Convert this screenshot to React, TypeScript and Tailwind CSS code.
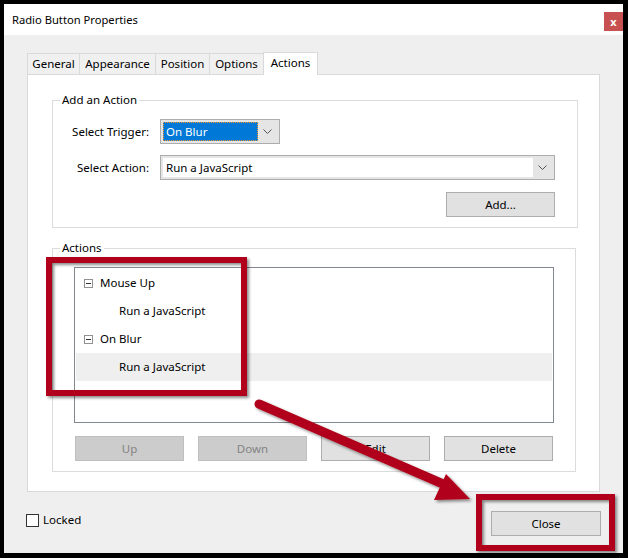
import React from 'react';

// small dropdown chevron
const Chevron = () => (
  <svg width="9" height="5" viewBox="0 0 9 5">
    <path d="M0.5 0.5 L4.5 4.5 L8.5 0.5" fill="none" stroke="#555" strokeWidth="1" />
  </svg>
);

const MinusBox = () => (
  <span className="w-[9px] h-[9px] border border-[#919191] bg-white flex items-center justify-center">
    <span className="w-[5px] h-px bg-[#333]" />
  </span>
);

type Tab = { label: string; w: string; active?: boolean };

const tabs: Tab[] = [
  { label: 'General', w: 'w-[53px]' },
  { label: 'Appearance', w: 'w-[77px]' },
  { label: 'Position', w: 'w-[55px]' },
  { label: 'Options', w: 'w-[55px]' },
  { label: 'Actions', w: 'w-[55px]', active: true },
];

type Row = { text: string; parent?: boolean; selected?: boolean };

const rows: Row[] = [
  { text: 'Mouse Up', parent: true },
  { text: 'Run a JavaScript' },
  { text: 'On Blur', parent: true },
  { text: 'Run a JavaScript', selected: true },
];

const Btn = ({ label, disabled }: { label: string; disabled?: boolean }) => (
  <div
    className={
      disabled
        ? 'w-[109px] h-[25px] border border-[#bfbfbf] bg-[#cccccc] text-[#838383] flex items-center justify-center'
        : 'w-[109px] h-[25px] border border-[#adadad] bg-[#e1e1e1] text-black flex items-center justify-center'
    }
  >
    {label}
  </div>
);

export default function App() {
  return (
    <div className="relative w-[628px] h-[558px] bg-black pt-[4px] pl-[4px] pr-[5px] pb-[5px] font-['Noto_Sans',sans-serif] text-[11.5px] text-black leading-[16px]">
      <div className="h-full flex flex-col bg-[#efefef]">
        {/* title bar */}
        <div className="h-[31px] bg-white flex justify-between pl-[8px]">
          <span className="mt-[8px] text-[11.2px]">Radio Button Properties</span>
          <span className="mt-[8px] w-[19px] h-[19px] bg-[#c75050] text-white flex items-center justify-center text-[11px] font-bold leading-none">
            x
          </span>
        </div>

        <div className="flex-1 pl-[23px] pr-[23px] pt-[17px]">
          {/* tabs */}
          <div className="flex items-end h-[22px]">
            {tabs.map((t, i) => (
              <div
                key={t.label}
                className={
                  (i > 0 ? '-ml-px ' : '') +
                  t.w +
                  (t.active
                    ? ' h-[23px] -mb-px relative z-10 bg-white border border-b-0 border-[#d9d9d9] flex items-center justify-center pb-[2px]'
                    : ' h-[21px] bg-[#f0f0f0] border border-b-0 border-[#d9d9d9] flex items-center justify-center')
                }
              >
                {t.label}
              </div>
            ))}
          </div>

          {/* panel */}
          <div className="h-[418px] bg-white border border-[#d9d9d9] pl-[24px] pr-[23px] pt-[17px]">
            <fieldset className="border border-[#dcdcdc]">
              <legend className="ml-[7px] px-[2px] leading-[16px]">Add an Action</legend>
              <div className="pr-[22px] pb-[10px] flex flex-col">
                <div className="flex items-center mt-[11px]">
                  <span className="w-[96px] text-right">Select Trigger:</span>
                  <div className="ml-[11px] w-[120px] h-[25px] border border-[#adadad] bg-[#e5e5e5] flex items-center p-[2px]">
                    <div className="flex-1 h-full bg-[#0078d7] text-white border border-dotted border-[#f59b2b] flex items-center pl-[2px]">
                      On Blur
                    </div>
                    <div className="w-[19px] flex justify-center">
                      <Chevron />
                    </div>
                  </div>
                </div>
                <div className="flex items-center mt-[11px]">
                  <span className="w-[96px] text-right">Select Action:</span>
                  <div className="ml-[11px] w-[395px] h-[25px] border border-[#adadad] bg-[#e5e5e5] flex items-center p-[2px]">
                    <div className="flex-1 h-full bg-white flex items-center pl-[3px]">Run a JavaScript</div>
                    <div className="w-[19px] flex justify-center">
                      <Chevron />
                    </div>
                  </div>
                </div>
                <div className="self-end mt-[12px]">
                  <Btn label="Add..." />
                </div>
              </div>
            </fieldset>

            <fieldset className="mt-[12px] border border-[#dcdcdc]">
              <legend className="ml-[7px] px-[2px] leading-[16px]">Actions</legend>
              <div className="pl-[21px] pb-[10px]">
                <div className="mt-[11px] w-[480px] h-[156px] border border-[#828790] bg-white pt-[1px]">
                  {rows.map((r, i) => (
                    <div
                      key={i}
                      className={
                        'h-[28px] mx-px flex items-center ' +
                        (r.selected ? 'bg-[#efefef] ' : '') +
                        (r.parent ? 'pl-[8px]' : 'pl-[43px]')
                      }
                    >
                      {r.parent && <MinusBox />}
                      <span className={r.parent ? 'ml-[7px]' : ''}>{r.text}</span>
                    </div>
                  ))}
                </div>
                <div className="mt-[13px] ml-px flex gap-[14px]">
                  <Btn label="Up" disabled />
                  <Btn label="Down" disabled />
                  <Btn label="Edit" />
                  <Btn label="Delete" />
                </div>
              </div>
            </fieldset>
          </div>

          {/* bottom row */}
          <div className="mt-[19px] flex items-start justify-between -mr-px">
            <label className="flex items-center gap-[4px] -ml-px mt-[1px]">
              <span className="w-[13px] h-[13px] border border-[#333] bg-white" />
              <span>Locked</span>
            </label>
            <div className="w-[110px] h-[25px] border border-[#adadad] bg-[#e1e1e1] flex items-center justify-center">
              Close
            </div>
          </div>
        </div>
      </div>

      {/* annotation overlay */}
      <svg className="absolute inset-0 pointer-events-none" width="628" height="558" viewBox="0 0 628 558">
        <defs>
          <filter id="sh" x="-10%" y="-10%" width="130%" height="130%">
            <feDropShadow dx="2" dy="2" stdDeviation="1.5" floodColor="#000" floodOpacity="0.45" />
          </filter>
        </defs>
        <g filter="url(#sh)">
          <rect x="49" y="260" width="195" height="133" fill="none" stroke="#b0001a" strokeWidth="6" />
          <rect x="479" y="497" width="133" height="51" fill="none" stroke="#b0001a" strokeWidth="6" />
          <line x1="259" y1="404" x2="450" y2="487" stroke="#b0001a" strokeWidth="9" strokeLinecap="round" />
          <polygon points="446,474 434,500 470,499" fill="#b0001a" />
        </g>
      </svg>
    </div>
  );
}
